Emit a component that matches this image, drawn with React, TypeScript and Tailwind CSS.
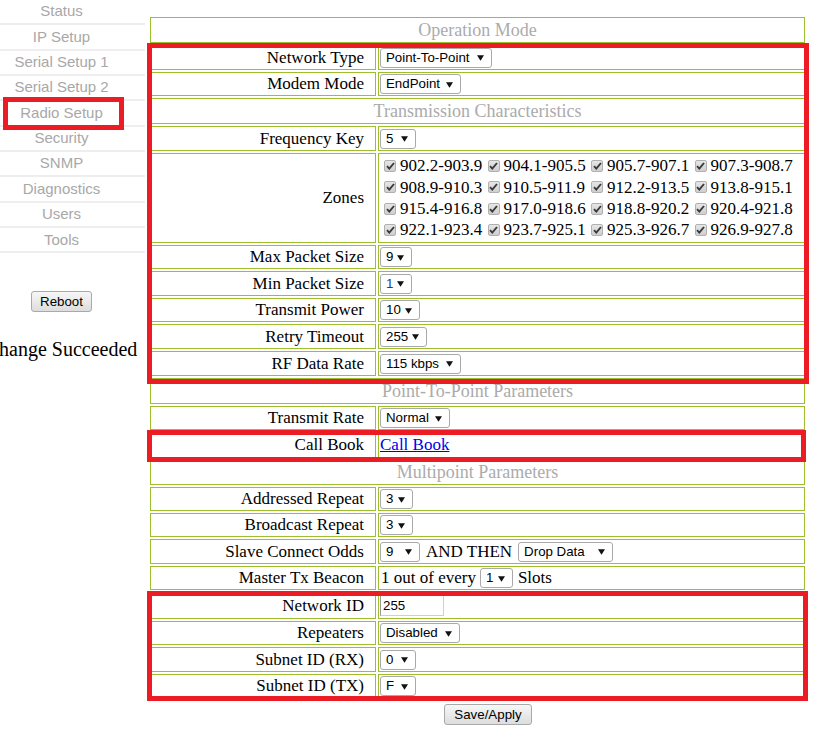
import React from 'react';

const navItems = [
  'Status',
  'IP Setup',
  'Serial Setup 1',
  'Serial Setup 2',
  'Radio Setup',
  'Security',
  'SNMP',
  'Diagnostics',
  'Users',
  'Tools',
];

const zones = [
  '902.2-903.9', '904.1-905.5', '905.7-907.1', '907.3-908.7',
  '908.9-910.3', '910.5-911.9', '912.2-913.5', '913.8-915.1',
  '915.4-916.8', '917.0-918.6', '918.8-920.2', '920.4-921.8',
  '922.1-923.4', '923.7-925.1', '925.3-926.7', '926.9-927.8',
];

const Arrow = () => (
  <svg width="7" height="7" viewBox="0 0 7 7" className="shrink-0">
    <path d="M0 1.2h7L3.5 6.8z" fill="#111" />
  </svg>
);

const Select = ({ value, width, blue }: { value: string; width: number; blue?: boolean }) => (
  <span
    className={`inline-flex h-[20px] items-center justify-between rounded-[3px] border border-[#a9a9a9] bg-white pl-[5px] pr-[7px] font-['Liberation_Sans',Arial,sans-serif] text-[13.3px] leading-none ${
      blue ? 'text-[#1c3d8f]' : 'text-black'
    }`}
    style={{ width }}
  >
    <span>{value}</span>
    <Arrow />
  </span>
);

const Checkbox = () => (
  <span className="ml-[4px] mr-[4px] inline-flex h-[12px] w-[12px] shrink-0 items-center justify-center rounded-[2px] border border-[#b0b0b0] bg-gradient-to-b from-[#e6e6e6] to-[#cfcfcf]">
    <svg width="9" height="8" viewBox="0 0 9 8">
      <path d="M1 4.2l2.3 2.4L8 1" stroke="#3a3a3a" strokeWidth="1.9" fill="none" />
    </svg>
  </span>
);

const Header = ({ title, h }: { title: string; h: number }) => (
  <div
    className="flex items-center justify-center border border-[#9cbf2b] font-['Liberation_Serif','Times_New_Roman',serif] text-[18px] text-[#ababab]"
    style={{ height: h }}
  >
    {title}
  </div>
);

const Row = ({ label, h, children }: { label: string; h: number; children: React.ReactNode }) => (
  <div className="flex gap-[2px]" style={{ height: h }}>
    <div className="flex w-[226px] shrink-0 items-center justify-end border border-[#9cbf2b] pr-[11px] text-[17px]">
      {label}
    </div>
    <div className="flex flex-1 items-center gap-[6px] border border-[#9cbf2b] pl-[1px] text-[17px]">
      {children}
    </div>
  </div>
);

const Button = ({ label, className }: { label: string; className?: string }) => (
  <button
    className={`h-[21px] rounded-[3px] border border-[#a9a9a9] bg-gradient-to-b from-[#f7f7f7] to-[#dddddd] font-['Liberation_Sans',Arial,sans-serif] text-[13.3px] text-black ${className ?? ''}`}
  >
    {label}
  </button>
);

const RedBox = ({ className }: { className: string }) => (
  <div className={`pointer-events-none absolute border-[5px] border-[#ec1c24] ${className}`} />
);

export default function App() {
  return (
    <div className="relative h-[734px] w-[833px] overflow-hidden bg-white font-['Liberation_Serif','Times_New_Roman',serif] text-black">
      <div className="flex">
        {/* side menu */}
        <div className="w-[145px] shrink-0">
          <ul className="font-['Liberation_Sans',Arial,sans-serif] text-[15px] text-[#a8a8a8]">
            {navItems.map((item) => (
              <li
                key={item}
                className="flex h-[25.35px] items-center justify-center border-b-2 border-[#eeeeee] pr-[22px]"
              >
                {item}
              </li>
            ))}
          </ul>
          <div className="mt-[38px] flex w-[123px] justify-center">
            <Button label="Reboot" className="w-[61px]" />
          </div>
          <div className="mt-[26px] flex w-[123px] justify-center whitespace-nowrap text-[20px] leading-[23px]">
            Change Succeeded
          </div>
        </div>

        {/* settings table */}
        <div className="ml-[5px] w-[655px] pt-[17px]">
          <div className="flex flex-col gap-[2px]">
            <Header title="Operation Mode" h={26} />
            <Row label="Network Type" h={25}>
              <Select value="Point-To-Point" width={112} />
            </Row>
            <Row label="Modem Mode" h={24}>
              <Select value="EndPoint" width={81} />
            </Row>
            <Header title="Transmission Characteristics" h={26} />
            <Row label="Frequency Key" h={25}>
              <Select value="5" width={36} />
            </Row>
            <Row label="Zones" h={90}>
              <div className="grid grid-cols-[repeat(4,103.5px)] leading-[21.3px]">
                {zones.map((z) => (
                  <span key={z} className="flex items-center whitespace-nowrap">
                    <Checkbox />
                    {z}
                  </span>
                ))}
              </div>
            </Row>
            <Row label="Max Packet Size" h={24}>
              <Select value="9" width={32} />
            </Row>
            <Row label="Min Packet Size" h={25}>
              <Select value="1" width={32} blue />
            </Row>
            <Row label="Transmit Power" h={24}>
              <Select value="10" width={40} />
            </Row>
            <Row label="Retry Timeout" h={25}>
              <Select value="255" width={47} />
            </Row>
            <Row label="RF Data Rate" h={25}>
              <Select value="115 kbps" width={81} />
            </Row>
            <Header title="Point-To-Point Parameters" h={26} />
            <Row label="Transmit Rate" h={24}>
              <Select value="Normal" width={70} />
            </Row>
            <Row label="Call Book" h={26}>
              <a href="#" className="text-[#0000ee] underline">
                Call Book
              </a>
            </Row>
            <Header title="Multipoint Parameters" h={25} />
            <Row label="Addressed Repeat" h={24}>
              <Select value="3" width={33} />
            </Row>
            <Row label="Broadcast Repeat" h={24}>
              <Select value="3" width={33} />
            </Row>
            <Row label="Slave Connect Odds" h={25}>
              <Select value="9" width={40} />
              <span>AND THEN</span>
              <Select value="Drop Data" width={95} />
            </Row>
            <Row label="Master Tx Beacon" h={24}>
              <span className="flex items-center gap-[4px] pl-[1px]">
                1 out of every
                <Select value="1" width={33} />
                <span className="pl-[1px]">Slots</span>
              </span>
            </Row>
            <Row label="Network ID" h={27}>
              <input
                readOnly
                value="255"
                className="h-[21px] w-[64px] border border-[#cfcfcf] border-l-[#9a9a9a] border-t-[#9a9a9a] px-[2px] font-['Liberation_Sans',Arial,sans-serif] text-[13.3px] outline-none"
              />
            </Row>
            <Row label="Repeaters" h={24}>
              <Select value="Disabled" width={80} />
            </Row>
            <Row label="Subnet ID (RX)" h={25}>
              <Select value="0" width={36} />
            </Row>
            <Row label="Subnet ID (TX)" h={24}>
              <Select value="F" width={36} />
            </Row>
          </div>
          <div className="mt-[4px] pl-[294px]">
            <Button label="Save/Apply" className="w-[88px]" />
          </div>
        </div>
      </div>

      {/* annotation boxes */}
      <RedBox className="left-[3px] top-[97px] h-[33px] w-[121px]" />
      <RedBox className="left-[147px] top-[43px] h-[341px] w-[662px]" />
      <RedBox className="left-[147px] top-[430px] h-[32px] w-[659px]" />
      <RedBox className="left-[147px] top-[591px] h-[110px] w-[661px]" />
    </div>
  );
}
